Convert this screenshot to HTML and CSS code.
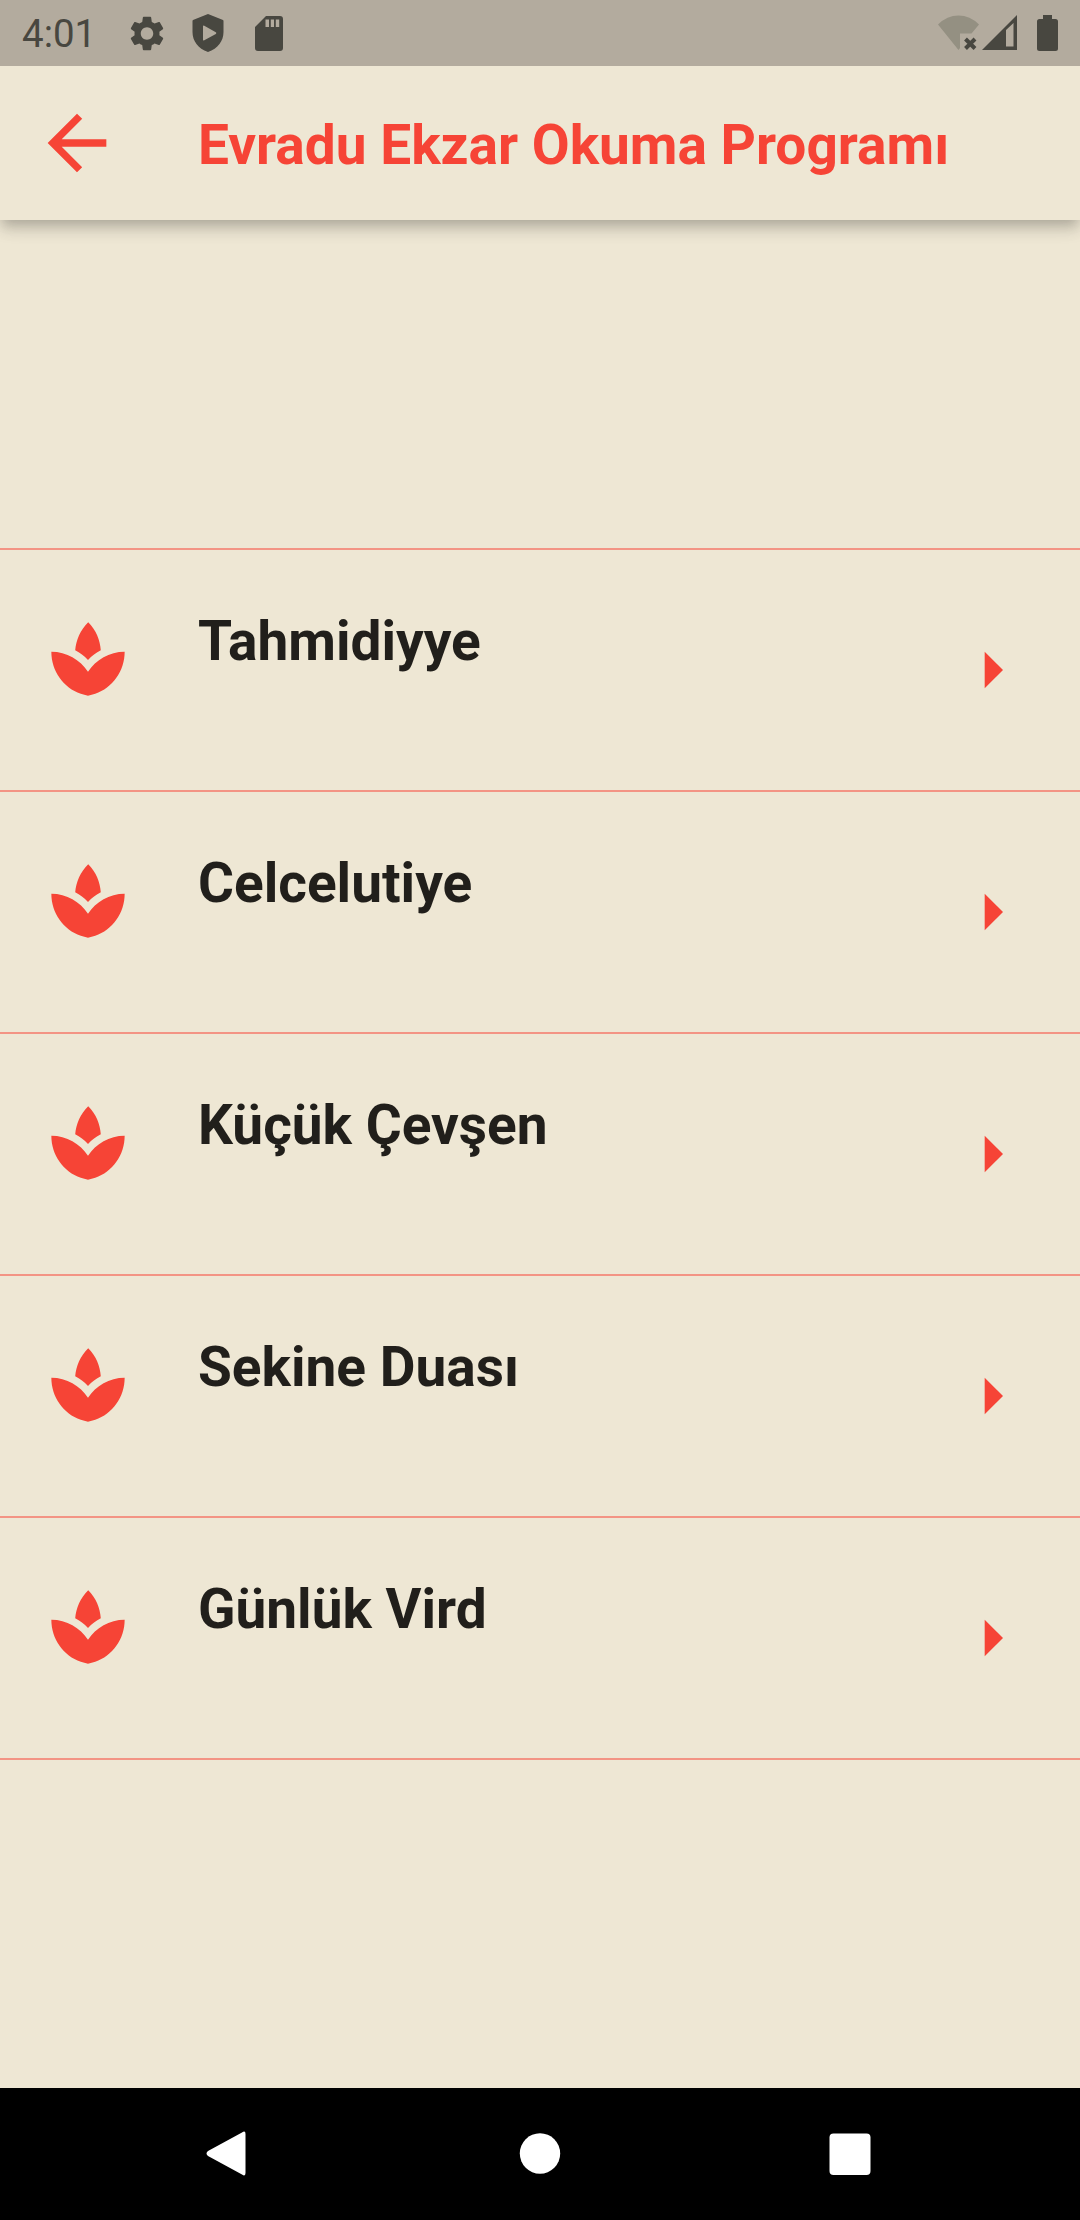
FILE: index.html
```html
<!DOCTYPE html>
<html lang="tr">
<head>
<meta charset="utf-8">
<title>Evradu Ekzar Okuma Programı</title>
<link rel="stylesheet" href="styles.css">
</head>
<body>
<svg class="defs" aria-hidden="true">
  <symbol id="spa" viewBox="0 0 24 24"><path d="M15.49 9.63c-.18-2.79-1.31-5.51-3.43-7.63-2.14 2.14-3.32 4.86-3.55 7.63 1.28.68 2.46 1.56 3.49 2.63 1.03-1.06 2.21-1.94 3.49-2.63zM12 15.45C9.85 12.17 6.18 10 2 10c0 5.32 3.36 9.82 8.03 11.49.63.23 1.29.4 1.97.51.68-.12 1.33-.29 1.97-.51C18.64 19.82 22 15.32 22 10c-4.18 0-7.85 2.17-10 5.45z"/></symbol>
  <symbol id="arrow" viewBox="0 0 24 24"><path d="M10 17l5-5-5-5v10z"/></symbol>
</svg>
<div class="screen">
  <header class="status">
    <span class="time">4:01</span>
    <div class="notes">
      <svg class="gear" viewBox="2.2 2 19.6 20"><path d="M19.14 12.94c.04-.3.06-.61.06-.94 0-.32-.02-.64-.07-.94l2.03-1.58c.18-.14.23-.41.12-.61l-1.92-3.32c-.12-.22-.37-.29-.59-.22l-2.39.96c-.5-.38-1.03-.7-1.62-.94l-.36-2.54c-.04-.24-.24-.41-.48-.41h-3.84c-.24 0-.43.17-.47.41l-.36 2.54c-.59.24-1.13.57-1.62.94l-2.39-.96c-.22-.08-.47 0-.59.22L2.74 8.87c-.12.21-.08.47.12.61l2.03 1.58c-.05.3-.09.63-.09.94s.02.64.07.94l-2.03 1.58c-.18.14-.23.41-.12.61l1.92 3.32c.12.22.37.29.59.22l2.39-.96c.5.38 1.03.7 1.62.94l.36 2.54c.05.24.24.41.48.41h3.84c.24 0 .44-.17.47-.41l.36-2.54c.59-.24 1.13-.56 1.62-.94l2.39.96c.22.08.47 0 .59-.22l1.92-3.32c.12-.22.07-.47-.12-.61l-2.01-1.58zM12 15.6c-1.98 0-3.6-1.62-3.6-3.6s1.62-3.6 3.6-3.6 3.6 1.62 3.6 3.6-1.62 3.6-3.6 3.6z"/></svg>
      <svg class="shield" viewBox="0 0 32 38"><path fill-rule="evenodd" d="M16 0L31 6Q31.500 6.300 31.500 7V18C31.500 27 26 34.500 16 38C6 34.500.5 27 .5 18V7Q.5 6.300 1 6ZM11 12.500V25.500Q11 27 12.300 26.200L23.800 20Q25 19 23.800 18.200L12.300 11.800Q11 11.200 11 12.500Z"/></svg>
      <svg class="card" viewBox="0 0 28 35"><path fill-rule="evenodd" d="M11 0H25Q28 0 28 3V32Q28 35 25 35H3Q0 35 0 32V11ZM10.500 3.500V11H14V3.500ZM15.800 3.500V11H19V3.500ZM20.800 3.500V11H24.200V3.500Z"/></svg>
    </div>
    <div class="signals">
      <svg class="wifi" viewBox="0 0 42 36"><path class="dim" d="M0 9.500Q9 .5 20.500 .5T41 9.500L33.500 18.500H22V33L20.500 35Z"/><path class="cross" d="M27.500 24L37 33.500M37 24L27.500 33.500"/></svg>
      <svg class="cell" viewBox="0 0 35 35"><path fill-rule="evenodd" d="M35 0V35H0ZM24 15V31.500H31.500V8Z"/></svg>
      <svg class="battery" viewBox="0 0 21 36"><path d="M6 0H15V4H18.500Q21 4 21 6.500V33.500Q21 36 18.500 36H2.500Q0 36 0 33.500V6.500Q0 4 2.500 4H6Z"/></svg>
    </div>
  </header>
  <div class="appbar">
    <svg class="back" viewBox="0 0 24 24"><path d="M20 11H7.830l5.590-5.590L12 4l-8 8 8 8 1.410-1.410L7.830 13H20v-2z"/></svg>
    <h1>Evradu Ekzar Okuma Programı</h1>
  </div>
  <main>
    <ul class="list">
      <li><svg class="spa"><use href="#spa"/></svg><span>Tahmidiyye</span><svg class="go"><use href="#arrow"/></svg></li>
      <li><svg class="spa"><use href="#spa"/></svg><span>Celcelutiye</span><svg class="go"><use href="#arrow"/></svg></li>
      <li><svg class="spa"><use href="#spa"/></svg><span>Küçük Çevşen</span><svg class="go"><use href="#arrow"/></svg></li>
      <li><svg class="spa"><use href="#spa"/></svg><span>Sekine Duası</span><svg class="go"><use href="#arrow"/></svg></li>
      <li><svg class="spa"><use href="#spa"/></svg><span>Günlük Vird</span><svg class="go"><use href="#arrow"/></svg></li>
    </ul>
  </main>
  <nav class="nav">
    <svg viewBox="3 0 48 48"><path d="M39 2.500Q42.500 0 42.500 4V43Q42.500 47 39 44.500L5 26Q2 23.500 5 21Z"/></svg>
    <svg viewBox="0 0 48 48"><circle cx="24" cy="23.500" r="20.200"/></svg>
    <svg viewBox="0 0 48 48"><rect x="3.500" y="3.500" width="41" height="41.500" rx="4"/></svg>
  </nav>
</div>
</body>
</html>
```
FILE: styles.css
```css
* { box-sizing: border-box; }
body { margin: 0; background: #eee7d4; font-family: Roboto, sans-serif; }
svg { display: block; flex: none; fill: currentColor; }
.defs { display: none; }
.screen { width: 1080px; height: 2220px; display: flex; flex-direction: column; overflow: hidden; }

.status { height: 66px; flex: none; display: flex; align-items: flex-start; padding: 0 22px; background: #b3ab9e; color: #484740; position: relative; z-index: 2; }
.time { width: 108px; font-size: 38.5px; line-height: 68px; }
.notes { display: flex; gap: 28px; }
.gear { width: 34px; height: 35px; margin-top: 16px; }
.shield { width: 32px; height: 38px; margin-top: 14px; }
.card { width: 28px; height: 35px; margin: 16px 0 0 3px; }
.signals { display: flex; margin-left: auto; padding-top: 15px; }
.wifi { width: 42px; height: 36px; }
.dim { fill: #949082; }
.cross { fill: none; stroke: #484740; stroke-width: 4; }
.cell { width: 35px; height: 35px; margin: 0 20px 0 2px; }
.battery { width: 21px; height: 36px; }

.appbar { height: 154px; flex: none; display: flex; align-items: center; padding-left: 33px; color: #f64436; position: relative; box-shadow: 0 5.5px 11px -2.75px rgba(0,0,0,.17), 0 11px 13.75px rgba(0,0,0,.11), 0 2.75px 27.5px rgba(0,0,0,.06); }
.back { width: 88px; height: 88px; margin-right: 77px; }
h1 { margin: 4px 0 0; font-size: 55px; font-weight: 700; line-height: 66px; white-space: nowrap; }

main { flex: 1; display: flex; flex-direction: column; justify-content: center; }
.list { list-style: none; margin: 0; padding: 0; border-bottom: 2px solid #f39484; }
.list li { height: 242px; display: flex; align-items: flex-start; padding: 0 44px; border-top: 2px solid #f39484; color: #f64436; }
.spa { width: 88px; height: 88px; margin: 65px 66px 0 0; }
.list span { flex: 1; margin-top: 58px; font-size: 55px; font-weight: 700; line-height: 66px; color: #211f1b; }
.go { width: 88px; height: 88px; margin-top: 76px; }

.nav { height: 132px; flex: none; display: flex; justify-content: center; align-items: center; gap: 262px; background: #000; color: #fff; }
.nav svg { width: 48px; height: 48px; }
```
